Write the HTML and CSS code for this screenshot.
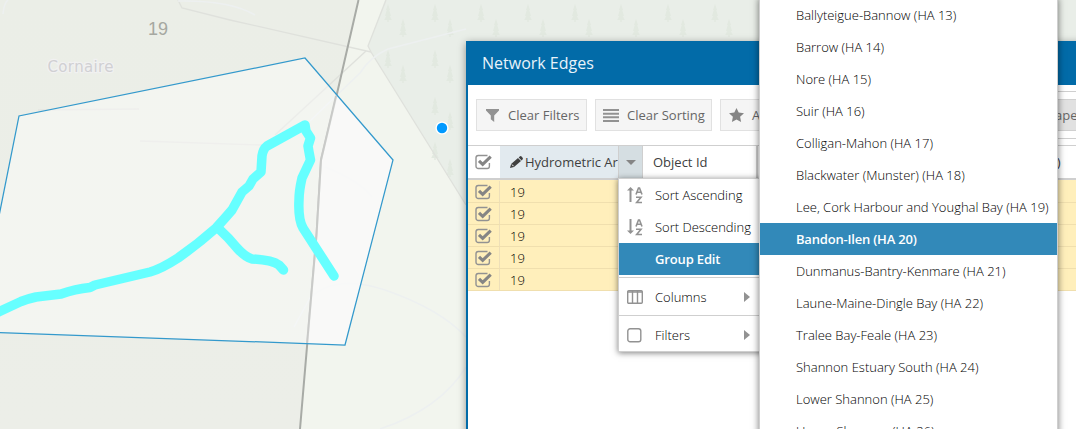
FILE: index.html
```html
<!DOCTYPE html>
<html lang="en">
<head>
<meta charset="utf-8">
<title>Network Edges</title>
<link rel="stylesheet" href="styles.css">
</head>
<body>
<svg class="symbols" width="0" height="0">
  <defs>
    <symbol id="check" viewBox="0 0 18 16">
      <path d="M14.4 9v3.2a2.3 2.3 0 0 1-2.3 2.3H3.3A2.3 2.3 0 0 1 1 12.200V3.800A2.300 2.300 0 0 1 3.300 1.500H12.500" fill="none" stroke="#929292" stroke-width="1.400"/>
      <path d="M4 6.800l3.700 3.600L15.700 2.600" fill="none" stroke="#858585" stroke-width="3.100"/>
    </symbol>
    <symbol id="letter-a" viewBox="0 0 8 8"><path d="M1 7.500L3.500 1H4.500L7 7.500M2.200 5.200H5.800" fill="none" stroke="#929292" stroke-width="1.600"/></symbol>
    <symbol id="letter-z" viewBox="0 0 8 8"><path d="M1 1.300H6L1.600 6.500H7" fill="none" stroke="#929292" stroke-width="1.600"/></symbol>
  </defs>
</svg>
<main class="app">
  <svg class="map" width="1076" height="429" viewBox="0 0 1076 429">
    <defs>
      <linearGradient id="land" x1="0" y1="0" x2="0" y2="1"><stop offset="0" stop-color="#ebeee7"/><stop offset="1" stop-color="#eceee8"/></linearGradient>
      <g id="tree" fill="#e2e9e0"><path d="M0-10L2-4H1.200L3 2H1.800L3.800 6H.7V8H-.7V6H-3.800L-1.800 2H-3L-1.200-4H-2Z"/></g>
    </defs>
    <rect width="1076" height="429" fill="#f2f5ee"/>
    <path d="M0 0H358L336 98L321 160L300 429H0Z" fill="url(#land)"/>
    <path d="M385 0H1076V429H620L466 205L371 52L368 46Z" fill="#e9eee8"/>
    <g>
      <use href="#tree" x="388" y="14"/><use href="#tree" x="435" y="14"/><use href="#tree" x="403" y="29"/><use href="#tree" x="450" y="29"/>
      <use href="#tree" x="388" y="60"/><use href="#tree" x="435" y="60"/><use href="#tree" x="403" y="75"/><use href="#tree" x="450" y="75"/>
      <use href="#tree" x="435" y="107"/><use href="#tree" x="450" y="122"/><use href="#tree" x="435" y="152"/><use href="#tree" x="450" y="169"/>
      <use href="#tree" x="481" y="14"/><use href="#tree" x="528" y="14"/><use href="#tree" x="575" y="14"/><use href="#tree" x="621" y="14"/><use href="#tree" x="668" y="14"/><use href="#tree" x="715" y="14"/>
      <use href="#tree" x="496" y="29"/><use href="#tree" x="543" y="29"/><use href="#tree" x="589" y="29"/><use href="#tree" x="636" y="29"/><use href="#tree" x="683" y="29"/><use href="#tree" x="729" y="29"/>
    </g>
    <g fill="none" stroke="#dfe1dc" stroke-width="1.300">
      <path d="M178 0L182 8L230 20L371 52"/><path d="M386 0L368 46L371 52L466 205"/><path d="M366 51L275 135"/><path d="M38 110L139 109M140 141L262 145" stroke="#e4e5e1"/>
    </g>
    <g fill="none" stroke="#edf0f0" stroke-width="1.500">
      <path d="M3 14Q4 3 8 0M178 1Q230 0 255 15M466 29L388 49Q370 57 360 73L310 121M294 327L310 298Q335 274 385 290Q440 309 466 337M466 367Q440 409 380 429M325 167Q360 181 372 197"/>
    </g>
    <path d="M358.500 0L336 98L321 160L316.500 235L300 429" fill="none" stroke="#a8aba6" stroke-width="2"/>
    <path d="M-3 222L19 116L305 58L393 160L345 345L-3 332.500Z" fill="#ffffff" fill-opacity=".4"/>
    <path d="M336 94L393 160L345 345L306 344L316.500 235L321 160Z" fill="#fafafa" fill-opacity=".7"/>
    <path d="M336 96L321 160L316.500 235L307 344" fill="none" stroke="#c9cac8" stroke-width="2"/>
    <path d="M-3 226L19 116L305 58L393 160L345 345L-3 332.500Z" fill="none" stroke="#3399cc" stroke-width="1.250"/>
    <g fill="none" stroke="#66ffff" stroke-width="9.500" stroke-linecap="round" stroke-linejoin="round">
      <path d="M-4 313L21 301.500Q27 299 36 297L61 294Q75 289 90 287.500L95 285L150 272Q161 269 178 258Q198 244 216 228L225 218L232 210L242 192L249 186L253 179L261 172L262 156Q263 149 267 146L305 125L306 131L310.500 138L308 146L309 152L310.500 160L302 178Q299 191 299 200Q298 219 303 228L334 276"/>
      <path d="M218 228Q229 238 237 248Q245 257 252 259Q272 260 279 265L283.500 270"/>
    </g>
    <circle cx="442" cy="128" r="6.600" fill="#fff"/><circle cx="442" cy="128" r="5.200" fill="#0099ff"/>
    <text x="148" y="35" class="map-number">19</text>
    <text x="47.500" y="72" class="map-place" textLength="66">Cornaire</text>
  </svg>

  <section class="window">
    <header class="window-title">Network Edges</header>
    <div class="toolbar">
      <button class="button"><svg width="13" height="13" viewBox="0 0 13 13"><path d="M0 0H13V1.500L8.200 6.500V13L4.800 10.300V6.500L0 1.500Z" fill="#929292"/></svg><span>Clear Filters</span></button>
      <button class="button sorting"><svg width="16" height="13" viewBox="0 0 16 13"><path d="M0 1H16M0 4.700H16M0 8.300H16M0 12H16" stroke="#929292" stroke-width="2"/></svg><span>Clear Sorting</span></button>
      <button class="button favourite"><svg width="15" height="14" viewBox="0 0 15 14"><path d="M7.500 0L9.700 4.600L15 5.300L11.100 8.800L12.100 14L7.500 11.500L2.900 14L3.900 8.800L0 5.300L5.300 4.600Z" fill="#858585"/></svg><span>Add</span></button>
      <div class="tool-group"><button class="button pressed">Shape</button></div>
    </div>
    <div class="grid-head">
      <div class="cell check-cell"><svg width="18" height="16"><use href="#check"/></svg></div>
      <div class="cell area-head"><svg width="13" height="12" viewBox="0 0 13 12"><path d="M0 12L1.100 7.900L8 2L11 5.100L4 11Z M8.700 1.400L9.700.4Q10.700-.3 11.600.6L12.600 1.700Q13.300 2.700 12.500 3.600L11.600 4.500Z" fill="#404040"/><path d="M2 8.500L3.500 10.200" stroke="#fff"/></svg><span>Hydrometric Ar</span></div>
      <div class="cell trigger"><i class="caret-down"></i></div>
      <div class="cell object-head">Object Id</div>
      <div class="cell last-head">(m)</div>
    </div>
    <div class="grid-body">
      <div class="row"><div class="check-cell"><svg width="18" height="16"><use href="#check"/></svg></div><div class="value">19</div></div>
      <div class="row"><div class="check-cell"><svg width="18" height="16"><use href="#check"/></svg></div><div class="value">19</div></div>
      <div class="row"><div class="check-cell"><svg width="18" height="16"><use href="#check"/></svg></div><div class="value">19</div></div>
      <div class="row"><div class="check-cell"><svg width="18" height="16"><use href="#check"/></svg></div><div class="value">19</div></div>
      <div class="row"><div class="check-cell"><svg width="18" height="16"><use href="#check"/></svg></div><div class="value">19</div></div>
    </div>
  </section>

  <nav class="menu">
    <div class="item"><span class="icon"><svg width="16" height="18" viewBox="0 0 16 18"><path d="M3.500 3V16" stroke="#929292" stroke-width="2"/><path d="M0 4.500L3.500 1L7 4.500Z" fill="#929292"/><use href="#letter-a" x="8" y="1" width="8" height="8"/><use href="#letter-z" x="8" y="10" width="8" height="8"/></svg></span><span>Sort Ascending</span></div>
    <div class="item"><span class="icon"><svg width="16" height="18" viewBox="0 0 16 18"><path d="M3.500 1V14" stroke="#929292" stroke-width="2"/><path d="M0 12.500L3.500 16L7 12.500Z" fill="#929292"/><use href="#letter-a" x="8" y="1" width="8" height="8"/><use href="#letter-z" x="8" y="10" width="8" height="8"/></svg></span><span>Sort Descending</span></div>
    <div class="item active"><span class="icon"></span><span>Group Edit</span></div>
    <div class="separator"></div>
    <div class="item"><span class="icon"><svg width="16" height="14" viewBox="0 0 16 14"><rect x=".7" y=".7" width="14.600" height="12.600" rx="1" fill="none" stroke="#929292" stroke-width="1.400"/><path d="M1 2H15M5.500 1V13M10.500 1V13" stroke="#929292" stroke-width="1.400"/></svg></span><span>Columns</span><i class="caret-right"></i></div>
    <div class="separator"></div>
    <div class="item"><span class="icon"><svg class="box" width="15" height="15"><rect x=".8" y=".8" width="13" height="13" rx="2.300" fill="none" stroke="#929292" stroke-width="1.400"/></svg></span><span>Filters</span><i class="caret-right"></i></div>
  </nav>

  <nav class="submenu">
    <div class="option">Ballyteigue-Bannow (HA 13)</div>
    <div class="option">Barrow (HA 14)</div>
    <div class="option">Nore (HA 15)</div>
    <div class="option">Suir (HA 16)</div>
    <div class="option">Colligan-Mahon (HA 17)</div>
    <div class="option">Blackwater (Munster) (HA 18)</div>
    <div class="option">Lee, Cork Harbour and Youghal Bay (HA 19)</div>
    <div class="option selected">Bandon-Ilen (HA 20)</div>
    <div class="option">Dunmanus-Bantry-Kenmare (HA 21)</div>
    <div class="option">Laune-Maine-Dingle Bay (HA 22)</div>
    <div class="option">Tralee Bay-Feale (HA 23)</div>
    <div class="option">Shannon Estuary South (HA 24)</div>
    <div class="option">Lower Shannon (HA 25)</div>
    <div class="option">Upper Shannon (HA 26)</div>
  </nav>
</main>
</body>
</html>
```
FILE: styles.css
```css
* { box-sizing: border-box; }
body { margin: 0; font: 13px "Open Sans", sans-serif; color: #404040; }
svg { display: block; flex: none; }
.symbols { position: absolute; }
.app { position: relative; width: 1076px; height: 429px; overflow: hidden; }
.map-number { font: 18px "Liberation Sans", sans-serif; fill: #a6a8a1; }
.map-place { font: 15px "DejaVu Sans", sans-serif; fill: #d0d0d3; stroke: #f1f1f1; stroke-width: 2.500px; paint-order: stroke; }

.window { position: absolute; left: 466px; top: 41px; width: 800px; height: 500px; border: 2px solid #026ba8; border-top: 0; background: #fff; box-shadow: 0 2px 8px rgba(0,0,0,.4); }
.window-title { height: 44px; padding-left: 14px; line-height: 44px; font-size: 16px; color: #e8f3fa; background: #026ba8; }
.toolbar { display: flex; gap: 8px; height: 60px; padding: 14px 8px 0; }
.button { display: flex; flex: none; align-items: center; width: 111px; height: 32px; padding: 0 0 0 9px; gap: 9px; border: 1px solid #e1e1e1; background: #f5f5f5; color: #666; font: inherit; white-space: nowrap; }
.button.sorting { width: 117px; padding-left: 7px; gap: 8px; }
.button.favourite { width: 120px; padding-left: 8px; gap: 8px; }
.tool-group { flex: none; width: 300px; height: 48px; margin: -8px 0 0 180px; padding-top: 7px; border: 1px solid #cfcfcf; }
.button.pressed { width: 80px; padding-left: 10px; background: #e1e1e1; border-color: #d0d0d0; }

.grid-head { display: flex; height: 35px; border-top: 1px solid #cfcfcf; border-bottom: 2px solid #cfcfcf; }
.cell { display: flex; flex: none; align-items: center; white-space: nowrap; overflow: hidden; }
.check-cell { display: flex; align-items: center; flex: none; width: 32px; padding-left: 7px; }
.area-head { width: 118px; padding-left: 10px; gap: 2px; background: #e2eaef; }
.trigger { width: 25px; justify-content: center; background: #d5dee2; border: solid #cfcfcf; border-width: 0 1px; }
.caret-down { border: 5px solid transparent; border-top-color: #858585; border-bottom: 0; }
.object-head { width: 115px; padding-left: 10px; border-right: 2px solid #cfcfcf; }
.last-head { width: 340px; padding-left: 283px; }
.grid-body { padding-top: 1px; background: #ffefbb; }
.row { display: flex; height: 22px; background: #ffefbb; border-bottom: 1px solid #f0dfae; }
.row .check-cell { border-right: 1px solid #eedfb8; }
.value { padding-left: 10px; line-height: 23px; font-weight: 300; color: #000; }

.menu { position: absolute; left: 618px; top: 178px; width: 160px; height: 174px; border: 1px solid #cfcfcf; background: #fff; color: #000; font-weight: 300; box-shadow: 0 1px 6px rgba(0,0,0,.5); }
.item { display: flex; align-items: center; height: 32px; padding-left: 8px; white-space: nowrap; }
.icon { width: 28px; }
.item.active { background: #3289b9; color: #fff; font-weight: 600; letter-spacing: -.15px; }
.separator { height: 1px; margin: 2px 0 3px; background: #cfcfcf; }
.caret-right { width: 0; margin-left: auto; margin-right: 27px; border: 5px solid transparent; border-left: 6px solid #929292; border-right: 0; }

.submenu { position: absolute; left: 759px; top: -2px; width: 299px; height: 460px; border: 1px solid #cfcfcf; background: #fff; color: #000; font-weight: 300; box-shadow: 0 0 7px rgba(0,0,0,.55); }
.option { height: 32px; padding-left: 36px; line-height: 32px; white-space: nowrap; }
.option.selected { background: #3289b9; color: #fff; font-weight: 600; letter-spacing: -.2px; }
.box { position: static; }
```
